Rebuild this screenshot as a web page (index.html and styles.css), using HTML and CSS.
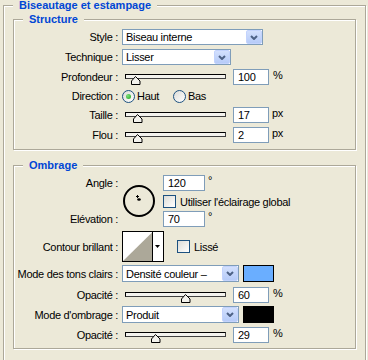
FILE: index.html
```html
<!DOCTYPE html>
<html lang="fr">
<head>
    <meta charset="UTF-8">
    <title>Biseautage et estampage</title>
    <link rel="stylesheet" href="styles.css">
</head>
<body>
    <fieldset class="group group-outer">
        <legend>Biseautage et estampage</legend>

        <!-- Structure -->
        <fieldset class="group group-inner">
            <legend>Structure</legend>
            <div class="rows structure-rows">
                <div class="row">
                    <span class="label">Style :</span>
                    <div class="ctl">
                        <div class="combo combo-style">
                            <span class="combo-text">Biseau interne</span>
                            <span class="combo-btn"><svg width="8" height="5" viewBox="0 0 8 5"><polyline points="1,1 4,4 7,1" fill="none" stroke="#4d6185" stroke-width="2"/></svg></span>
                        </div>
                    </div>
                </div>
                <div class="row">
                    <span class="label">Technique :</span>
                    <div class="ctl">
                        <div class="combo combo-tech">
                            <span class="combo-text">Lisser</span>
                            <span class="combo-btn"><svg width="8" height="5" viewBox="0 0 8 5"><polyline points="1,1 4,4 7,1" fill="none" stroke="#4d6185" stroke-width="2"/></svg></span>
                        </div>
                    </div>
                </div>
                <div class="row">
                    <span class="label">Profondeur :</span>
                    <div class="ctl">
                        <div class="slider">
                            <div class="track"></div>
                            <svg class="thumb" style="left: 6px" width="10" height="9" viewBox="0 0 10 9"><polygon points="4.5,0.5 9,5 9,8.5 0.5,8.5 0.5,5" fill="#f3f2ec" stroke="#000"/></svg>
                        </div>
                        <span class="field">100</span>
                        <span class="unit">%</span>
                    </div>
                </div>
                <div class="row row-radio">
                    <span class="label">Direction :</span>
                    <div class="ctl">
                        <span class="option"><span class="radio radio-on"></span>Haut</span>
                        <span class="option"><span class="radio"></span>Bas</span>
                    </div>
                </div>
                <div class="row">
                    <span class="label">Taille :</span>
                    <div class="ctl">
                        <div class="slider">
                            <div class="track"></div>
                            <svg class="thumb" style="left: 8px" width="10" height="9" viewBox="0 0 10 9"><polygon points="4.5,0.5 9,5 9,8.5 0.5,8.5 0.5,5" fill="#f3f2ec" stroke="#000"/></svg>
                        </div>
                        <span class="field">17</span>
                        <span class="unit unit-px">px</span>
                    </div>
                </div>
                <div class="row">
                    <span class="label">Flou :</span>
                    <div class="ctl">
                        <div class="slider">
                            <div class="track"></div>
                            <svg class="thumb" style="left: 8px" width="10" height="9" viewBox="0 0 10 9"><polygon points="4.5,0.5 9,5 9,8.5 0.5,8.5 0.5,5" fill="#f3f2ec" stroke="#000"/></svg>
                        </div>
                        <span class="field">2</span>
                        <span class="unit unit-px">px</span>
                    </div>
                </div>
            </div>
        </fieldset>

        <!-- Ombrage -->
        <fieldset class="group group-inner group-shade">
            <legend>Ombrage</legend>
            <div class="rows shade-rows">
                <div class="angle-block">
                    <span class="label label-angle">Angle :</span>
                    <svg class="dial" width="34" height="34" viewBox="0 0 34 34">
                        <circle cx="17" cy="17" r="15" fill="none" stroke="#000" stroke-width="2"/>
                        <path d="M14 12.5h3M15.5 11v3" stroke="#000" stroke-width="1"/>
                        <ellipse cx="17" cy="15.5" rx="1.8" ry="1.3" fill="#000"/>
                    </svg>
                    <div class="ctl ctl-angle">
                        <span class="field field-wide">120</span>
                        <span class="deg">°</span>
                    </div>
                    <div class="ctl ctl-global">
                        <span class="check"></span>
                        <span class="check-text">Utiliser l'éclairage global</span>
                    </div>
                    <span class="label label-elev">Elévation :</span>
                    <div class="ctl ctl-elev">
                        <span class="field field-wide">70</span>
                        <span class="deg">°</span>
                    </div>
                </div>

                <div class="row row-contour">
                    <span class="label">Contour brillant :</span>
                    <div class="ctl">
                        <svg class="contour" width="42" height="31" viewBox="0 0 42 31">
                            <rect x="0.5" y="0.5" width="41" height="30" fill="#fff" stroke="#000"/>
                            <polygon points="1,30 30,1.5 30,30" fill="#aca899"/>
                            <line x1="30.5" y1="1" x2="30.5" y2="30" stroke="#000"/>
                            <polygon points="33,14 38,14 35.5,17" fill="#000"/>
                        </svg>
                        <span class="check check-smooth"></span>
                        <span class="check-text">Lissé</span>
                    </div>
                </div>

                <div class="row row-mode row-mode-first">
                    <span class="label">Mode des tons clairs :</span>
                    <div class="ctl">
                        <div class="combo combo-mode">
                            <span class="combo-text">Densité couleur –</span>
                            <span class="combo-btn"><svg width="8" height="5" viewBox="0 0 8 5"><polyline points="1,1 4,4 7,1" fill="none" stroke="#4d6185" stroke-width="2"/></svg></span>
                        </div>
                        <span class="swatch swatch-light"></span>
                    </div>
                </div>
                <div class="row row-opa row-opa-first">
                    <span class="label">Opacité :</span>
                    <div class="ctl">
                        <div class="slider">
                            <div class="track"></div>
                            <svg class="thumb" style="left: 56px" width="10" height="9" viewBox="0 0 10 9"><polygon points="4.5,0.5 9,5 9,8.5 0.5,8.5 0.5,5" fill="#f3f2ec" stroke="#000"/></svg>
                        </div>
                        <span class="field">60</span>
                        <span class="unit">%</span>
                    </div>
                </div>
                <div class="row row-mode">
                    <span class="label">Mode d'ombrage :</span>
                    <div class="ctl">
                        <div class="combo combo-mode">
                            <span class="combo-text">Produit</span>
                            <span class="combo-btn"><svg width="8" height="5" viewBox="0 0 8 5"><polyline points="1,1 4,4 7,1" fill="none" stroke="#4d6185" stroke-width="2"/></svg></span>
                        </div>
                        <span class="swatch swatch-dark"></span>
                    </div>
                </div>
                <div class="row row-opa">
                    <span class="label">Opacité :</span>
                    <div class="ctl">
                        <div class="slider">
                            <div class="track"></div>
                            <svg class="thumb" style="left: 26px" width="10" height="9" viewBox="0 0 10 9"><polygon points="4.5,0.5 9,5 9,8.5 0.5,8.5 0.5,5" fill="#f3f2ec" stroke="#000"/></svg>
                        </div>
                        <span class="field">29</span>
                        <span class="unit">%</span>
                    </div>
                </div>
            </div>
        </fieldset>
    </fieldset>
</body>
</html>
```

FILE: styles.css
```css
* {
    box-sizing: border-box;
    margin: 0;
    padding: 0;
}

body {
    background-color: #ece9d8;
    font-family: "Liberation Sans", Arial, sans-serif;
    font-size: 11px;
    letter-spacing: -0.3px;
    color: #000;
    overflow: hidden;
}

/* group boxes */
.group {
    border: 1px solid #aca899;
    box-shadow: inset 1px 1px 0 #fff, 1px 1px 0 #fff;
    min-width: 0;
}

.group legend {
    margin-left: 9px;
    padding: 0 6px;
    background-color: #ece9d8;
    color: #0046d5;
    font-weight: bold;
    line-height: 11px;
    letter-spacing: 0;
}

.group-outer {
    margin: 0 2px 0 3px;
    padding-bottom: 30px;
}

.group-inner {
    margin: 3px 9px 0;
}

.group-shade {
    margin-top: 10px;
}

/* rows */
.rows {
    display: flex;
    flex-direction: column;
}

.structure-rows {
    gap: 4px;
    padding: 4px 0 6px;
}

.shade-rows {
    padding: 4px 0 5px;
}

.row {
    display: grid;
    grid-template-columns: 104px 1fr;
    column-gap: 4px;
    align-items: center;
    height: 16px;
}

.row-radio {
    height: 14px;
}

.label {
    text-align: right;
    white-space: nowrap;
}

.ctl {
    display: flex;
    align-items: center;
    height: 100%;
}

/* combo boxes */
.combo {
    display: flex;
    align-items: center;
    height: 16px;
    border: 1px solid #7f9db9;
    background: #fff;
}

.combo-style {
    width: 141px;
}

.combo-tech {
    width: 109px;
}

.combo-mode {
    width: 117px;
    height: 17px;
}

.combo-text {
    padding-left: 3px;
    white-space: nowrap;
}

.combo-btn {
    display: flex;
    align-items: center;
    justify-content: center;
    width: 16px;
    height: 100%;
    margin-left: auto;
    background: linear-gradient(#d3e0fd, #b6cbf8);
    border: 1px solid #c3d3fd;
    border-radius: 2px;
}

/* text fields */
.field {
    display: flex;
    align-items: center;
    width: 36px;
    height: 16px;
    margin-left: 7px;
    padding-left: 4px;
    border: 1px solid #7f9db9;
    background: #fff;
}

.field-wide {
    width: 42px;
    margin-left: 0;
}

.unit {
    margin-left: 4px;
    align-self: flex-start;
    line-height: 13px;
}

.unit-px {
    margin-left: 3px;
}

.deg {
    margin-left: 3px;
    align-self: flex-start;
    line-height: 11px;
}

/* sliders */
.slider {
    position: relative;
    width: 101px;
    height: 16px;
    margin-left: 3px;
}

.track {
    margin-top: 5px;
    height: 5px;
    border: 1px solid #000;
    border-right-color: #404040;
    border-bottom-color: #404040;
    background: #f4f3ee;
}

.thumb {
    position: absolute;
    top: 7px;
}

/* radio and checkbox */
.option {
    display: flex;
    align-items: center;
    gap: 2px;
    width: 51px;
}

.radio {
    display: flex;
    align-items: center;
    justify-content: center;
    width: 13px;
    height: 13px;
    border: 1px solid #1c5180;
    border-radius: 50%;
    background: linear-gradient(135deg, #dcdcd7, #fff);
}

.radio-on::after {
    content: "";
    width: 5px;
    height: 5px;
    border-radius: 50%;
    background: radial-gradient(circle at 35% 35%, #7be27b, #21a121);
}

.check {
    width: 13px;
    height: 13px;
    border: 1px solid #1c5180;
    background: linear-gradient(135deg, #dcdcd7, #fff);
}

.check-text {
    margin-left: 4px;
    white-space: nowrap;
}

/* Ombrage: angle block */
.angle-block {
    display: grid;
    grid-template-columns: 104px 37px 1fr;
    grid-template-rows: 16px 17px 19px;
    column-gap: 4px;
    align-items: end;
}

.label-angle {
    grid-column: 1;
    grid-row: 1;
    align-self: center;
}

.dial {
    grid-column: 2;
    grid-row: 1 / 4;
    align-self: center;
}

.ctl-angle {
    grid-column: 3;
    grid-row: 1;
    height: 16px;
}

.ctl-global {
    grid-column: 3;
    grid-row: 2;
    height: 13px;
}

.label-elev {
    grid-column: 1;
    grid-row: 3;
    line-height: 16px;
}

.ctl-elev {
    grid-column: 3;
    grid-row: 3;
    height: 16px;
}

.row-contour {
    height: 31px;
    margin-top: 4px;
}

.check-smooth {
    margin-left: 13px;
}

.row-mode {
    height: 17px;
    margin-top: 3px;
}

.row-opa {
    margin-top: 4px;
}

.row-opa-first {
    margin-top: 5px;
}

.swatch {
    width: 31px;
    height: 17px;
    margin-left: 4px;
    border: 1px solid #000;
}

.swatch-light {
    background: #6aaeff;
}

.swatch-dark {
    background: #000;
}
```
